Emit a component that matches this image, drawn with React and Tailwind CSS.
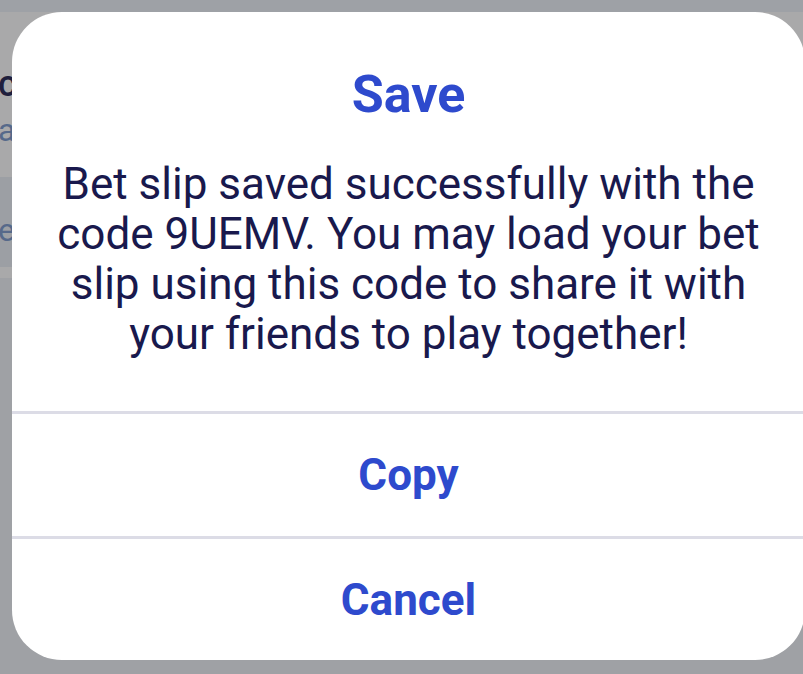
export default function App() {
  const font = { fontFamily: 'Roboto, "Noto Sans", Arial, sans-serif' };
  return (
    <div className="relative w-[803px] h-[674px] overflow-hidden bg-[#9fa1a5]" style={font}>
      {/* background page seen through the overlay */}
      <div className="flex flex-col h-full">
        <div className="h-[12px] bg-[#9ea1a6]" />
        <div className="h-[165px] bg-[#a9a9aa] flex flex-col">
          <div className="mt-[52px] -ml-[2px] text-[36px] leading-[40px] font-medium text-[#1f1f3d]">cc</div>
          <div className="mt-[8px] -ml-[2px] text-[32px] leading-[36px] text-[#56698a]">a</div>
        </div>
        <div className="h-[90px] bg-[#9c9fa4] flex flex-col">
          <div className="mt-[36px] -ml-[2px] text-[32px] leading-[34px] text-[#56698a]">e</div>
        </div>
        <div className="h-[11px] bg-[#a9a9aa]" />
        <div className="flex-1 bg-[#9fa1a5]" />
      </div>

      {/* dialog */}
      <div className="absolute left-[12px] top-[12px] w-[793px] h-[648px] bg-white rounded-[50px] flex flex-col overflow-hidden">
        <div className="pt-[53px] text-center text-[52px] leading-[60px] font-bold text-[#2e4acd]">Save</div>
        <div className="mt-[34px] px-[40px] text-center text-[44px] leading-[50px] text-[#19194d]">
          Bet slip saved successfully with the code 9UEMV. You may load your bet slip using this code to share it with your friends to play together!
        </div>
        <div className="mt-auto h-[3px] bg-[#dcdce6]" />
        <div className="h-[122px] flex items-center justify-center text-[44px] font-bold text-[#2e4acd]">Copy</div>
        <div className="h-[3px] bg-[#dcdce6]" />
        <div className="h-[121px] flex items-center justify-center text-[44px] font-bold text-[#2e4acd]">Cancel</div>
      </div>
    </div>
  );
}
